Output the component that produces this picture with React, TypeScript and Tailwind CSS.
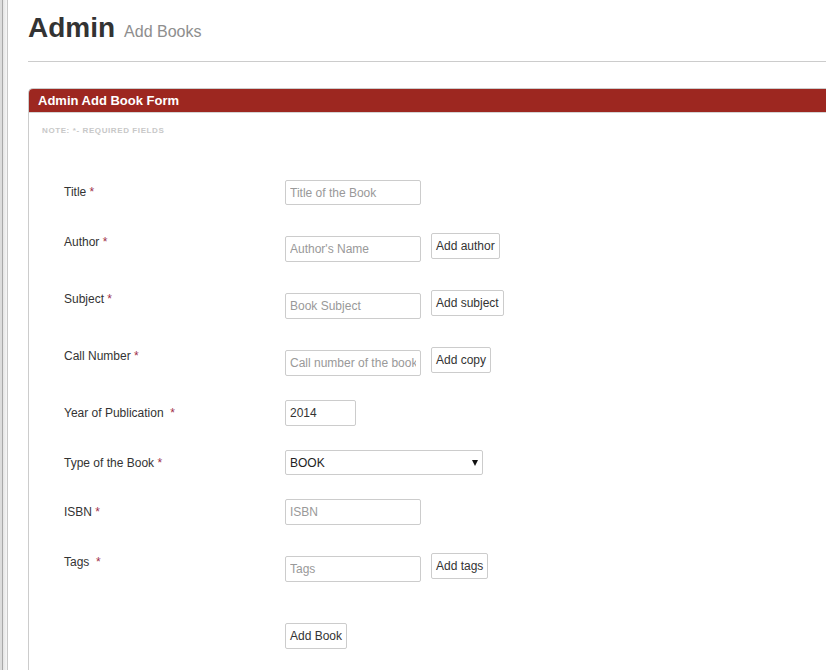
import React from "react";

const font = { fontFamily: '"Liberation Sans", Arial, sans-serif' };

function Star() {
  return <span className="text-[#a0304a]">*</span>;
}

function Input({ placeholder, value, w = "w-[136px]", h = "h-[26px]", mt = "" }: { placeholder?: string; value?: string; w?: string; h?: string; mt?: string }) {
  return (
    <input
      readOnly
      placeholder={placeholder}
      defaultValue={value}
      className={`${w} ${h} ${mt} border border-[#cccccc] rounded-[2px] px-[4px] text-[12px] text-[#333] placeholder:text-[#999] bg-white outline-none`}
      style={font}
    />
  );
}

function Btn({ children }: { children: React.ReactNode }) {
  return (
    <button
      className="h-[26px] border border-[#cccccc] rounded-[2px] px-[4px] text-[12px] text-[#333] bg-white leading-none"
      style={font}
    >
      {children}
    </button>
  );
}

export default function App() {
  return (
    <div className="w-[826px] h-[670px] overflow-hidden flex bg-white" style={font}>
      {/* left frame strip */}
      <div className="flex h-full shrink-0">
        <div className="w-[2px] bg-[#dcdcdc]" />
        <div className="w-[1px] bg-[#a8a8a8]" />
        <div className="w-[4px] bg-gradient-to-r from-[#e4e4e4] to-[#f6f6f6]" />
        <div className="w-[1px] bg-[#c8c8c8]" />
      </div>
      <div className="flex-1 flex flex-col">
        <div className="h-[2px] bg-[#efefef]" />
        <div className="h-[1px] bg-[#c4c4c4]" />
        <div className="pl-[20px]">
          <div className="pt-[12px] pb-[17px] border-b border-[#cccccc] flex items-baseline">
            <span className="text-[28px] leading-[32px] font-bold text-[#333]">Admin</span>
            <span className="ml-[9px] text-[16px] text-[#8e8e8e]">Add Books</span>
          </div>
          <div className="mt-[26px] border-l border-t border-[#cccccc] rounded-tl-[5px]">
            <div className="h-[23px] bg-[#9d2720] rounded-tl-[4px] pl-[9px] text-[13px] leading-[23px] font-bold text-white">
              Admin Add Book Form
            </div>
            <div className="border-t border-[#d4d4d4] pt-[13px]">
              <div className="pl-[13px] text-[8px] leading-[10px] font-bold tracking-[0.6px] text-[#c8c8c8] uppercase">
                Note: *- Required fields
              </div>
              <div className="pl-[35px] text-[12px] text-[#333]">
                {/* Title */}
                <div className="mt-[44px] flex items-start">
                  <div className="w-[221px] pt-[3px] leading-[18px]">Title <Star /></div>
                  <Input placeholder="Title of the Book" h="h-[25px]" />
                </div>
                {/* Author */}
                <div className="mt-[28px] flex items-start">
                  <div className="w-[221px] leading-[18px]">Author <Star /></div>
                  <Input placeholder="Author's Name" mt="mt-[3px]" />
                  <div className="ml-[10px]"><Btn>Add author</Btn></div>
                </div>
                {/* Subject */}
                <div className="mt-[28px] flex items-start">
                  <div className="w-[221px] leading-[18px]">Subject <Star /></div>
                  <Input placeholder="Book Subject" mt="mt-[3px]" />
                  <div className="ml-[10px]"><Btn>Add subject</Btn></div>
                </div>
                {/* Call Number */}
                <div className="mt-[28px] flex items-start">
                  <div className="w-[221px] leading-[18px]">Call Number <Star /></div>
                  <Input placeholder="Call number of the book" mt="mt-[3px]" />
                  <div className="ml-[10px]"><Btn>Add copy</Btn></div>
                </div>
                {/* Year */}
                <div className="mt-[24px] flex items-start">
                  <div className="w-[221px] pt-[4px] leading-[18px]">Year of Publication&nbsp; <Star /></div>
                  <Input value="2014" w="w-[71px]" />
                </div>
                {/* Type */}
                <div className="mt-[24px] flex items-start">
                  <div className="w-[221px] pt-[4px] leading-[18px]">Type of the Book <Star /></div>
                  <div className="relative w-[198px] h-[25px]">
                    <select
                      className="appearance-none w-full h-full border border-[#cccccc] rounded-[2px] pl-[4px] text-[12px] text-[#222] bg-white outline-none"
                      style={font}
                      defaultValue="BOOK"
                    >
                      <option>BOOK</option>
                    </select>
                    <div className="absolute right-[5px] top-[10px] w-0 h-0 border-l-[3.5px] border-r-[3.5px] border-t-[6px] border-l-transparent border-r-transparent border-t-[#111] pointer-events-none" />
                  </div>
                </div>
                {/* ISBN */}
                <div className="mt-[24px] flex items-start">
                  <div className="w-[221px] pt-[4px] leading-[18px]">ISBN <Star /></div>
                  <Input placeholder="ISBN" />
                </div>
                {/* Tags */}
                <div className="mt-[28px] flex items-start">
                  <div className="w-[221px] leading-[18px]">Tags&nbsp; <Star /></div>
                  <Input placeholder="Tags" mt="mt-[3px]" />
                  <div className="ml-[10px]"><Btn>Add tags</Btn></div>
                </div>
                {/* Submit */}
                <div className="mt-[41px] flex items-start">
                  <div className="w-[221px]" />
                  <Btn>Add Book</Btn>
                </div>
                <div className="h-[40px]" />
              </div>
            </div>
          </div>
        </div>
      </div>
    </div>
  );
}
